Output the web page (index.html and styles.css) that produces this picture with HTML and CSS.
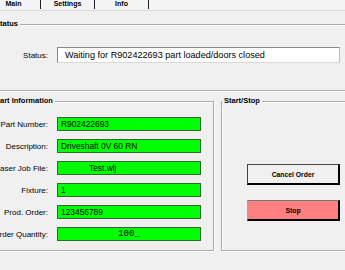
FILE: index.html
```html
<!DOCTYPE html>
<html lang="en">
<head>
    <meta charset="UTF-8">
    <meta name="viewport" content="width=device-width, initial-scale=1.0">
    <title>Laser Station</title>
    <link rel="stylesheet" href="styles.css">
</head>
<body>
    <div class="tabs">
        <div class="tab">Main</div>
        <div class="tab">Settings</div>
        <div class="tab">Info</div>
    </div>

    <div class="page">
        <fieldset class="group status-group">
            <legend>Status</legend>
            <div class="status-row">
                <label>Status:</label>
                <div class="status-box">Waiting for R902422693 part loaded/doors closed</div>
            </div>
        </fieldset>

        <div class="lower">
            <fieldset class="group part-group">
                <legend>Part Information</legend>
                <div class="fields">
                    <label>Part Number:</label>
                    <div class="field">R902422693</div>
                    <label>Description:</label>
                    <div class="field">Driveshaft 0V 60 RN</div>
                    <label>Laser Job File:</label>
                    <div class="field field-indent">Test.wlj</div>
                    <label>Fixture:</label>
                    <div class="field">1</div>
                    <label>Prod. Order:</label>
                    <div class="field">123456789</div>
                    <label>Order Quantity:</label>
                    <div class="field field-qty">100_</div>
                </div>
            </fieldset>

            <fieldset class="group control-group">
                <legend>Start/Stop</legend>
                <div class="actions">
                    <button class="btn">Cancel Order</button>
                    <button class="btn btn-stop">Stop</button>
                </div>
            </fieldset>
        </div>
    </div>
</body>
</html>
```

FILE: styles.css
```css
body {
    margin: 0;
    width: 345px;
    height: 270px;
    overflow: hidden;
    background-color: #f0f0f0;
    font-family: "Liberation Sans", Arial, sans-serif;
    color: #000;
}
.tabs {
    display: flex;
    height: 10px;
    margin-left: -13px;
    border-bottom: 1px solid #dadada;
    background-color: #f4f4f4;
}
.tab {
    width: 53px;
    height: 9px;
    border-right: 1px solid #222;
    font-size: 7px;
    font-weight: bold;
    line-height: 8px;
    text-align: center;
}
.page {
    margin-left: -10px;
    width: 375px;
}
.group {
    margin: 0;
    min-width: 0;
    border: 1px solid #ababab;
    box-shadow: inset 1px 1px #fff, 1px 1px #fff;
}
.group legend {
    margin-left: 2px;
    padding: 0 2px;
    font-size: 7.5px;
    font-weight: bold;
    line-height: 10px;
    background-color: #f0f0f0;
}
.status-group {
    margin-top: 8px;
    padding: 18px 0 27px 0;
}
.status-row {
    display: grid;
    grid-template-columns: 57px 283px;
    column-gap: 9px;
    align-items: center;
}
label {
    font-size: 8px;
    text-align: right;
}
.status-box {
    height: 14px;
    padding-left: 7px;
    border: 1px solid #8a8a8a;
    border-right-color: #bdbdbd;
    border-bottom-color: #d8d8d8;
    background-color: #fff;
    font-size: 9.1px;
    line-height: 14px;
    white-space: nowrap;
}
.lower {
    display: flex;
    gap: 7px;
    margin-top: 5px;
}
.part-group {
    width: 224px;
    box-sizing: border-box;
    padding: 11px 12px 9px 0;
}
.fields {
    display: grid;
    grid-template-columns: 57px 144px;
    column-gap: 9px;
    row-gap: 8px;
    align-items: center;
}
.field {
    height: 12px;
    padding-left: 3px;
    border: 1px solid #2f6b2f;
    background-color: #00ff00;
    font-size: 8.4px;
    line-height: 12px;
    white-space: nowrap;
}
.field-indent {
    padding-left: 31px;
}
.field-qty {
    padding-left: 0;
    text-align: center;
    font-family: "Liberation Mono", monospace;
    font-size: 9px;
}
.control-group {
    flex: 1;
    padding: 0;
}
.control-group legend {
    margin-left: 0;
}
.actions {
    display: flex;
    flex-direction: column;
    gap: 15px;
    padding: 58px 0 0 25px;
}
.btn {
    width: 93px;
    height: 21px;
    margin: 0;
    padding: 0;
    border: 1px solid #444;
    border-right: 2px solid #000;
    border-bottom: 2px solid #000;
    background-color: #f0f0f0;
    font-family: "Liberation Sans", Arial, sans-serif;
    font-size: 6.8px;
    font-weight: bold;
    color: #000;
}
.btn-stop {
    border-top-color: #777;
    border-left-color: #ff8080;
    background-color: #ff8080;
}
```
